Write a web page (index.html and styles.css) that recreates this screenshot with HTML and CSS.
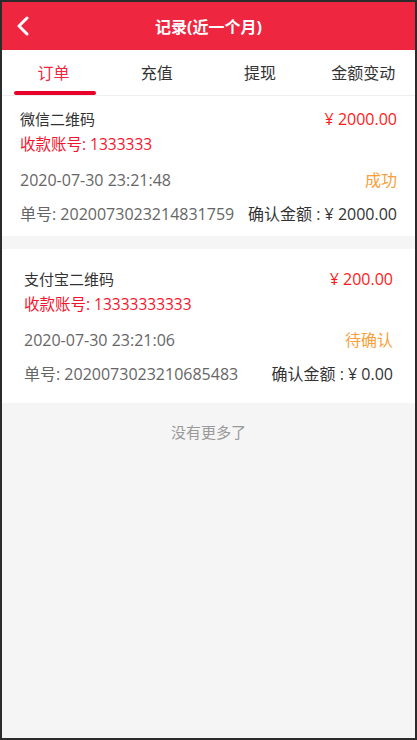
FILE: index.html
```html
<!DOCTYPE html>
<html lang="zh-CN">
<head>
<meta charset="UTF-8" />
<meta name="viewport" content="width=device-width, initial-scale=1, maximum-scale=1" />
<title>记录(近一个月)</title>
<link rel="stylesheet" href="styles.css">
</head>
<body>
<div class="page">
  <header class="topbar">
    <a class="back" href="#">
      <svg width="14" height="20" viewBox="0 0 14 20"><path d="M11 2 L3 10 L11 18" fill="none" stroke="#fff" stroke-width="3" stroke-linecap="round" stroke-linejoin="round"/></svg>
    </a>
    <h1>记录(近一个月)</h1>
  </header>

  <nav class="tabs">
    <a class="tab active" href="#">订单</a>
    <a class="tab" href="#">充值</a>
    <a class="tab" href="#">提现</a>
    <a class="tab" href="#">金额变动</a>
  </nav>

  <div class="list">
    <div class="card">
      <div class="row">
        <span class="name">微信二维码</span>
        <span class="amount">¥ 2000.00</span>
      </div>
      <div class="row account">收款账号: 1333333</div>
      <div class="meta">
        <div class="row">
          <span class="time">2020-07-30 23:21:48</span>
          <span class="status ok">成功</span>
        </div>
        <div class="row">
          <span class="order-no">单号: 2020073023214831759</span>
          <span class="confirm">确认金额 : ¥ 2000.00</span>
        </div>
      </div>
    </div>

    <div class="card wide">
      <div class="row">
        <span class="name">支付宝二维码</span>
        <span class="amount">¥ 200.00</span>
      </div>
      <div class="row account">收款账号: 13333333333</div>
      <div class="meta">
        <div class="row">
          <span class="time">2020-07-30 23:21:06</span>
          <span class="status">待确认</span>
        </div>
        <div class="row">
          <span class="order-no">单号: 2020073023210685483</span>
          <span class="confirm">确认金额 : ¥ 0.00</span>
        </div>
      </div>
    </div>

    <div class="no-more">没有更多了</div>
  </div>
</div>
</body>
</html>
```

FILE: styles.css
```css
* {
  box-sizing: border-box;
}
html, body {
  margin: 0;
  height: 100%;
}
body {
  background: #2b2b2b;
  font-family: "Open Sans", "Noto Sans CJK SC", sans-serif;
  color: #333;
}
.page {
  height: 100%;
  border: 2px solid #2b2b2b;
  background: #f5f5f5;
  display: flex;
  flex-direction: column;
}
.topbar {
  height: 48px;
  background: #ef2640;
  display: flex;
  align-items: center;
  justify-content: center;
  position: relative;
}
.topbar h1 {
  margin: 0;
  font-size: 16px;
  font-weight: 700;
  color: #fff;
}
.back {
  position: absolute;
  left: 14px;
  top: 14px;
  display: flex;
}
.tabs {
  height: 46px;
  background: #fff;
  border-bottom: 1px solid #eee;
  display: flex;
}
.tab {
  flex: 1;
  display: flex;
  align-items: center;
  justify-content: center;
  position: relative;
  font-size: 16px;
  color: #333;
  text-decoration: none;
  padding-bottom: 2px;
}
.tab.active {
  color: #f0263f;
}
.tab.active::after {
  content: "";
  position: absolute;
  left: 12px;
  right: 9px;
  bottom: 0;
  height: 4px;
  border-radius: 2px;
  background: #e8002a;
}
.list {
  display: flex;
  flex-direction: column;
  gap: 13px;
}
.card {
  background: #fff;
  padding: 11px 18px 5px;
  font-size: 16px;
}
.card.wide {
  padding: 18px 22px 12px;
}
.row {
  display: flex;
  justify-content: space-between;
  line-height: 25px;
}
.name {
  font-size: 15px;
}
.amount {
  color: #ff1a1a;
}
.account {
  color: #f5142e;
  font-size: 15.5px;
}
.meta {
  margin-top: 6px;
}
.meta .row {
  line-height: 34px;
}
.time, .order-no {
  color: #666;
}
.status {
  color: #f9a03a;
}
.no-more {
  text-align: center;
  color: #999;
  font-size: 15px;
  line-height: 30px;
  margin-top: 1px;
}
```
